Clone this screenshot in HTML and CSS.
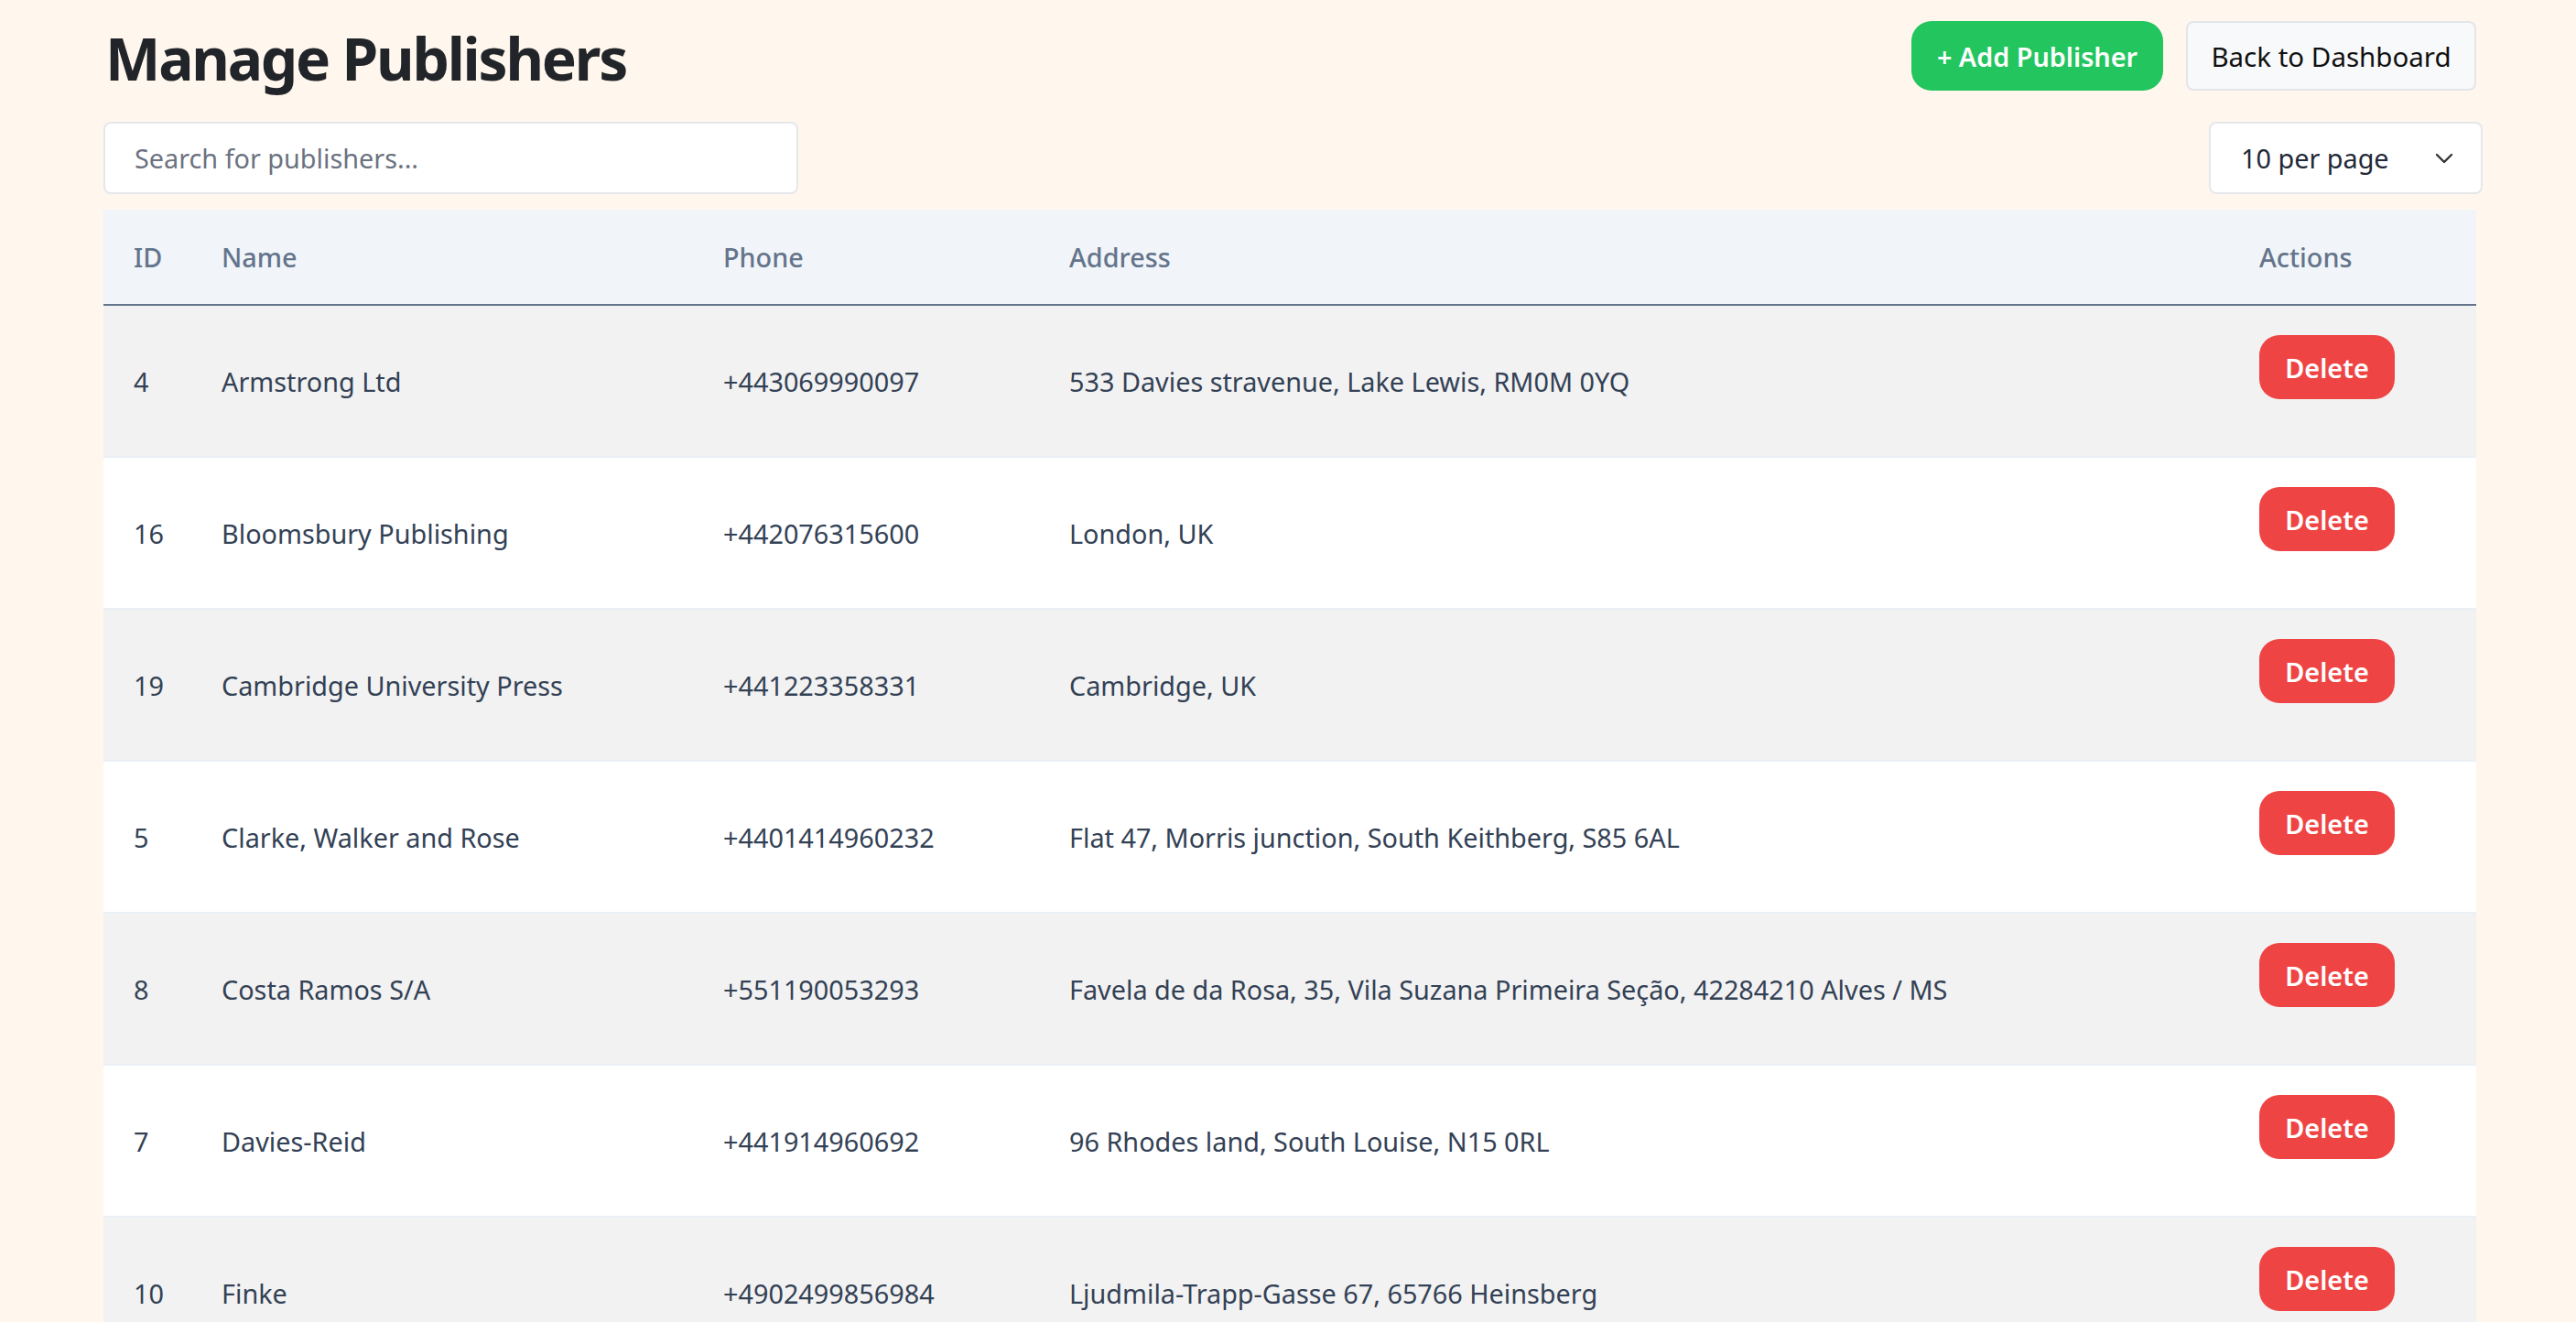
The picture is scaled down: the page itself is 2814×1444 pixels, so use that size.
FILE: index.html
```html
<!DOCTYPE html>
<html lang="en">
<head>
<meta charset="utf-8">
<title>Manage Publishers</title>
<link rel="stylesheet" href="styles.css">
</head>
<body>
<div class="page">
  <header class="topbar">
    <h1 class="title">Manage Publishers</h1>
    <div class="top-actions">
      <a class="btn btn-green" href="#">+ Add Publisher</a>
      <a class="btn btn-light" href="#">Back to Dashboard</a>
    </div>
  </header>

  <div class="toolbar">
    <div class="search">Search for publishers...</div>
    <div class="select">
      <span>10 per page</span>
      <svg class="chev" width="20" height="12" viewBox="0 0 20 12"><path d="M2 2 L10 10 L18 2" fill="none" stroke="#333" stroke-width="2.4" stroke-linecap="round" stroke-linejoin="round"/></svg>
    </div>
  </div>

  <table class="grid">
    <colgroup>
      <col class="c-id"><col class="c-name"><col class="c-phone"><col class="c-addr"><col class="c-act">
    </colgroup>
    <thead>
      <tr><th>ID</th><th>Name</th><th>Phone</th><th>Address</th><th>Actions</th></tr>
    </thead>
    <tbody>
      <tr><td>4</td><td>Armstrong Ltd</td><td>+443069990097</td><td>533 Davies stravenue, Lake Lewis, RM0M 0YQ</td><td class="act"><button class="del">Delete</button></td></tr>
      <tr><td>16</td><td>Bloomsbury Publishing</td><td>+442076315600</td><td>London, UK</td><td class="act"><button class="del">Delete</button></td></tr>
      <tr><td>19</td><td>Cambridge University Press</td><td>+441223358331</td><td>Cambridge, UK</td><td class="act"><button class="del">Delete</button></td></tr>
      <tr><td>5</td><td>Clarke, Walker and Rose</td><td>+4401414960232</td><td>Flat 47, Morris junction, South Keithberg, S85 6AL</td><td class="act"><button class="del">Delete</button></td></tr>
      <tr><td>8</td><td>Costa Ramos S/A</td><td>+551190053293</td><td>Favela de da Rosa, 35, Vila Suzana Primeira Seção, 42284210 Alves / MS</td><td class="act"><button class="del">Delete</button></td></tr>
      <tr><td>7</td><td>Davies-Reid</td><td>+441914960692</td><td>96 Rhodes land, South Louise, N15 0RL</td><td class="act"><button class="del">Delete</button></td></tr>
      <tr><td>10</td><td>Finke</td><td>+4902499856984</td><td>Ljudmila-Trapp-Gasse 67, 65766 Heinsberg</td><td class="act"><button class="del">Delete</button></td></tr>
    </tbody>
  </table>
</div>
</body>
</html>
```

FILE: styles.css
```css
* { box-sizing: border-box; }
html, body { margin: 0; padding: 0; }
body {
  background: #fff6ed;
  font-family: "Noto Sans", "Open Sans", "Liberation Sans", sans-serif;
  font-size: 28.8px;
  color: #334155;
  padding-left: 4px;
}
.page {
  width: 2592px;
  margin: 0 auto;
  padding-top: 23px;
}
.topbar {
  display: flex;
  justify-content: space-between;
  align-items: center;
  height: 76px;
}
.title {
  margin: 0;
  padding: 5px 0 0 2px;
  font-size: 64px;
  font-weight: 700;
  color: #212529;
  line-height: 72px;
  letter-spacing: -2.2px;
}
.top-actions {
  display: flex;
  gap: 25px;
  align-items: center;
}
.btn {
  display: flex;
  align-items: center;
  justify-content: center;
  height: 76px;
  text-decoration: none;
  font-size: 28.8px;
}
.btn-green {
  width: 275px;
  background: #22c55e;
  color: #fff;
  font-weight: 600;
  border-radius: 22px;
}
.btn-light {
  width: 317px;
  background: #f8f9fb;
  color: #111;
  border: 2px solid #e3e5ea;
  border-radius: 8px;
  font-size: 29.5px;
}
.toolbar {
  display: flex;
  justify-content: space-between;
  align-items: center;
  margin-top: 34px;
  margin-bottom: 17px;
}
.search {
  width: 759px;
  height: 79px;
  background: #fff;
  border: 2px solid #e5e7eb;
  border-radius: 8px;
  padding-left: 32px;
  display: flex;
  align-items: center;
  color: #6b7280;
}
.select {
  width: 299px;
  height: 79px;
  margin-right: -7px;
  background: #fff;
  border: 2px solid #e5e7eb;
  border-radius: 8px;
  padding: 0 30px 0 33px;
  display: flex;
  align-items: center;
  justify-content: space-between;
  color: #1f2937;
}
.chev { display: block; }
.grid {
  width: 100%;
  border-collapse: collapse;
  table-layout: fixed;
}
.c-id { width: 96px; }
.c-name { width: 548px; }
.c-phone { width: 378px; }
.c-addr { width: 1300px; }
.c-act { width: 270px; }
.grid th {
  background: #f1f5f9;
  color: #64748b;
  font-weight: 500;
  text-align: left;
  height: 104px;
  padding: 0 0 0 33px;
  border-bottom: 2px solid #64748b;
}
.grid td {
  padding: 0 0 0 33px;
  vertical-align: middle;
  border-bottom: 2px solid #eaf0f6;
  white-space: nowrap;
}
.grid tbody tr:nth-child(odd) { background: #f2f2f2; }
.grid tbody tr:nth-child(even) { background: #ffffff; }
.grid td.act {
  vertical-align: top;
  padding: 32px 0 62px 33px;
}
.del {
  display: block;
  width: 148px;
  height: 70px;
  border: 0;
  border-radius: 22px;
  background: #ef4444;
  color: #fff;
  font-family: inherit;
  font-size: 28.8px;
  font-weight: 600;
  padding: 0;
  cursor: pointer;
}
```
